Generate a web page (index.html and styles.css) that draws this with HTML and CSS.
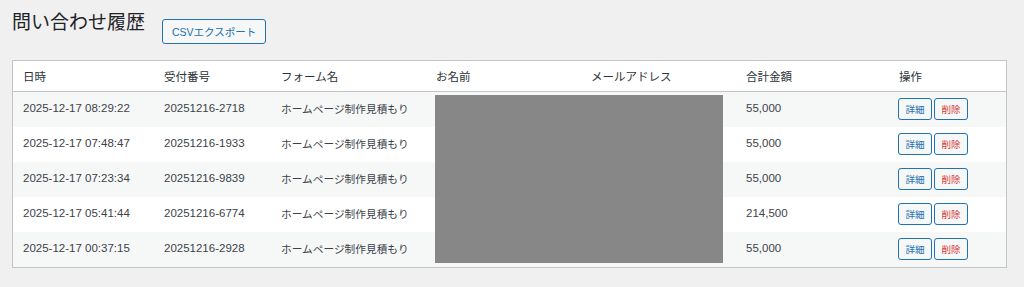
FILE: index.html
```html
<!DOCTYPE html>
<html lang="ja">

<head>
    <meta charset="UTF-8">
    <meta name="viewport" content="width=device-width, initial-scale=1.0">
    <title>問い合わせ履歴</title>
    <link rel="stylesheet" href="styles.css">
</head>

<body>
    <div class="wrap">
        <div class="page-head">
            <h1 class="page-title">問い合わせ履歴</h1>
            <button class="btn btn-export">CSVエクスポート</button>
        </div>

        <div class="table-box">
            <table class="list">
                <thead>
                    <tr>
                        <th class="col-date">日時</th>
                        <th class="col-no">受付番号</th>
                        <th class="col-form">フォーム名</th>
                        <th class="col-name">お名前</th>
                        <th class="col-mail">メールアドレス</th>
                        <th class="col-total">合計金額</th>
                        <th class="col-act">操作</th>
                    </tr>
                </thead>
                <tbody>
                    <tr>
                        <td>2025-12-17 08:29:22</td>
                        <td>20251216-2718</td>
                        <td class="form-name">ホームページ制作見積もり</td>
                        <td></td>
                        <td></td>
                        <td>55,000</td>
                        <td class="actions"><button class="btn btn-sm">詳細</button><button class="btn btn-sm btn-del">削除</button></td>
                    </tr>
                    <tr>
                        <td>2025-12-17 07:48:47</td>
                        <td>20251216-1933</td>
                        <td class="form-name">ホームページ制作見積もり</td>
                        <td></td>
                        <td></td>
                        <td>55,000</td>
                        <td class="actions"><button class="btn btn-sm">詳細</button><button class="btn btn-sm btn-del">削除</button></td>
                    </tr>
                    <tr>
                        <td>2025-12-17 07:23:34</td>
                        <td>20251216-9839</td>
                        <td class="form-name">ホームページ制作見積もり</td>
                        <td></td>
                        <td></td>
                        <td>55,000</td>
                        <td class="actions"><button class="btn btn-sm">詳細</button><button class="btn btn-sm btn-del">削除</button></td>
                    </tr>
                    <tr>
                        <td>2025-12-17 05:41:44</td>
                        <td>20251216-6774</td>
                        <td class="form-name">ホームページ制作見積もり</td>
                        <td></td>
                        <td></td>
                        <td>214,500</td>
                        <td class="actions"><button class="btn btn-sm">詳細</button><button class="btn btn-sm btn-del">削除</button></td>
                    </tr>
                    <tr>
                        <td>2025-12-17 00:37:15</td>
                        <td>20251216-2928</td>
                        <td class="form-name">ホームページ制作見積もり</td>
                        <td></td>
                        <td></td>
                        <td>55,000</td>
                        <td class="actions"><button class="btn btn-sm">詳細</button><button class="btn btn-sm btn-del">削除</button></td>
                    </tr>
                </tbody>
            </table>
            <div class="redact"></div>
        </div>
    </div>
</body>

</html>
```

FILE: styles.css
```css
* {
    margin: 0;
    padding: 0;
    box-sizing: border-box
}

:root {
    --page-bg: #f0f0f1;
    --border: #c3c4c7;
    --stripe: #f6f7f7;
    --text: #3c434a;
    --heading: #1d2327;
    --blue: #2271b1;
    --red: #d63638
}

body {
    background: var(--page-bg);
    color: var(--text);
    font-family: "Liberation Sans", "Noto Sans CJK JP", sans-serif;
    font-size: 11.5px
}

.wrap {
    padding: 0 17px 0 12px
}

.page-head {
    display: flex;
    align-items: flex-start;
    gap: 17px;
    height: 60px
}

.page-title {
    margin-top: 10px;
    font-size: 19px;
    font-weight: 400;
    line-height: 26px;
    color: var(--heading)
}

.btn {
    font-family: inherit;
    background: var(--stripe);
    border: 1px solid var(--blue);
    border-radius: 3px;
    color: var(--blue);
    cursor: pointer
}

.btn-export {
    margin-top: 19px;
    width: 104px;
    height: 25px;
    font-size: 10.5px
}

.table-box {
    position: relative;
    background: #fff;
    border: 1px solid var(--border)
}

.list {
    width: 100%;
    border-collapse: collapse;
    table-layout: fixed
}

.list th {
    height: 30px;
    padding: 0 10px;
    text-align: left;
    font-weight: 400;
    font-size: 11.5px;
    color: #2c3338;
    border-bottom: 1px solid var(--border)
}

.list td {
    height: 35px;
    padding: 0 10px 2px;
    white-space: nowrap
}

.list td.form-name {
    font-size: 10.7px
}

.list tbody tr:nth-child(odd) {
    background: var(--stripe)
}

.col-date { width: 141px }
.col-no { width: 117px }
.col-form { width: 155px }
.col-name { width: 155px }
.col-mail { width: 155px }
.col-total { width: 153px }

.actions {
    display: flex;
    align-items: center;
    gap: 2px
}

.list td.actions {
    padding: 0 9px;
    height: 35px
}

.btn-sm {
    width: 34px;
    height: 22px;
    font-size: 9.5px
}

.btn-del {
    color: var(--red)
}

.redact {
    position: absolute;
    left: 422px;
    top: 34px;
    width: 288px;
    height: 168px;
    background: #878787
}
```
